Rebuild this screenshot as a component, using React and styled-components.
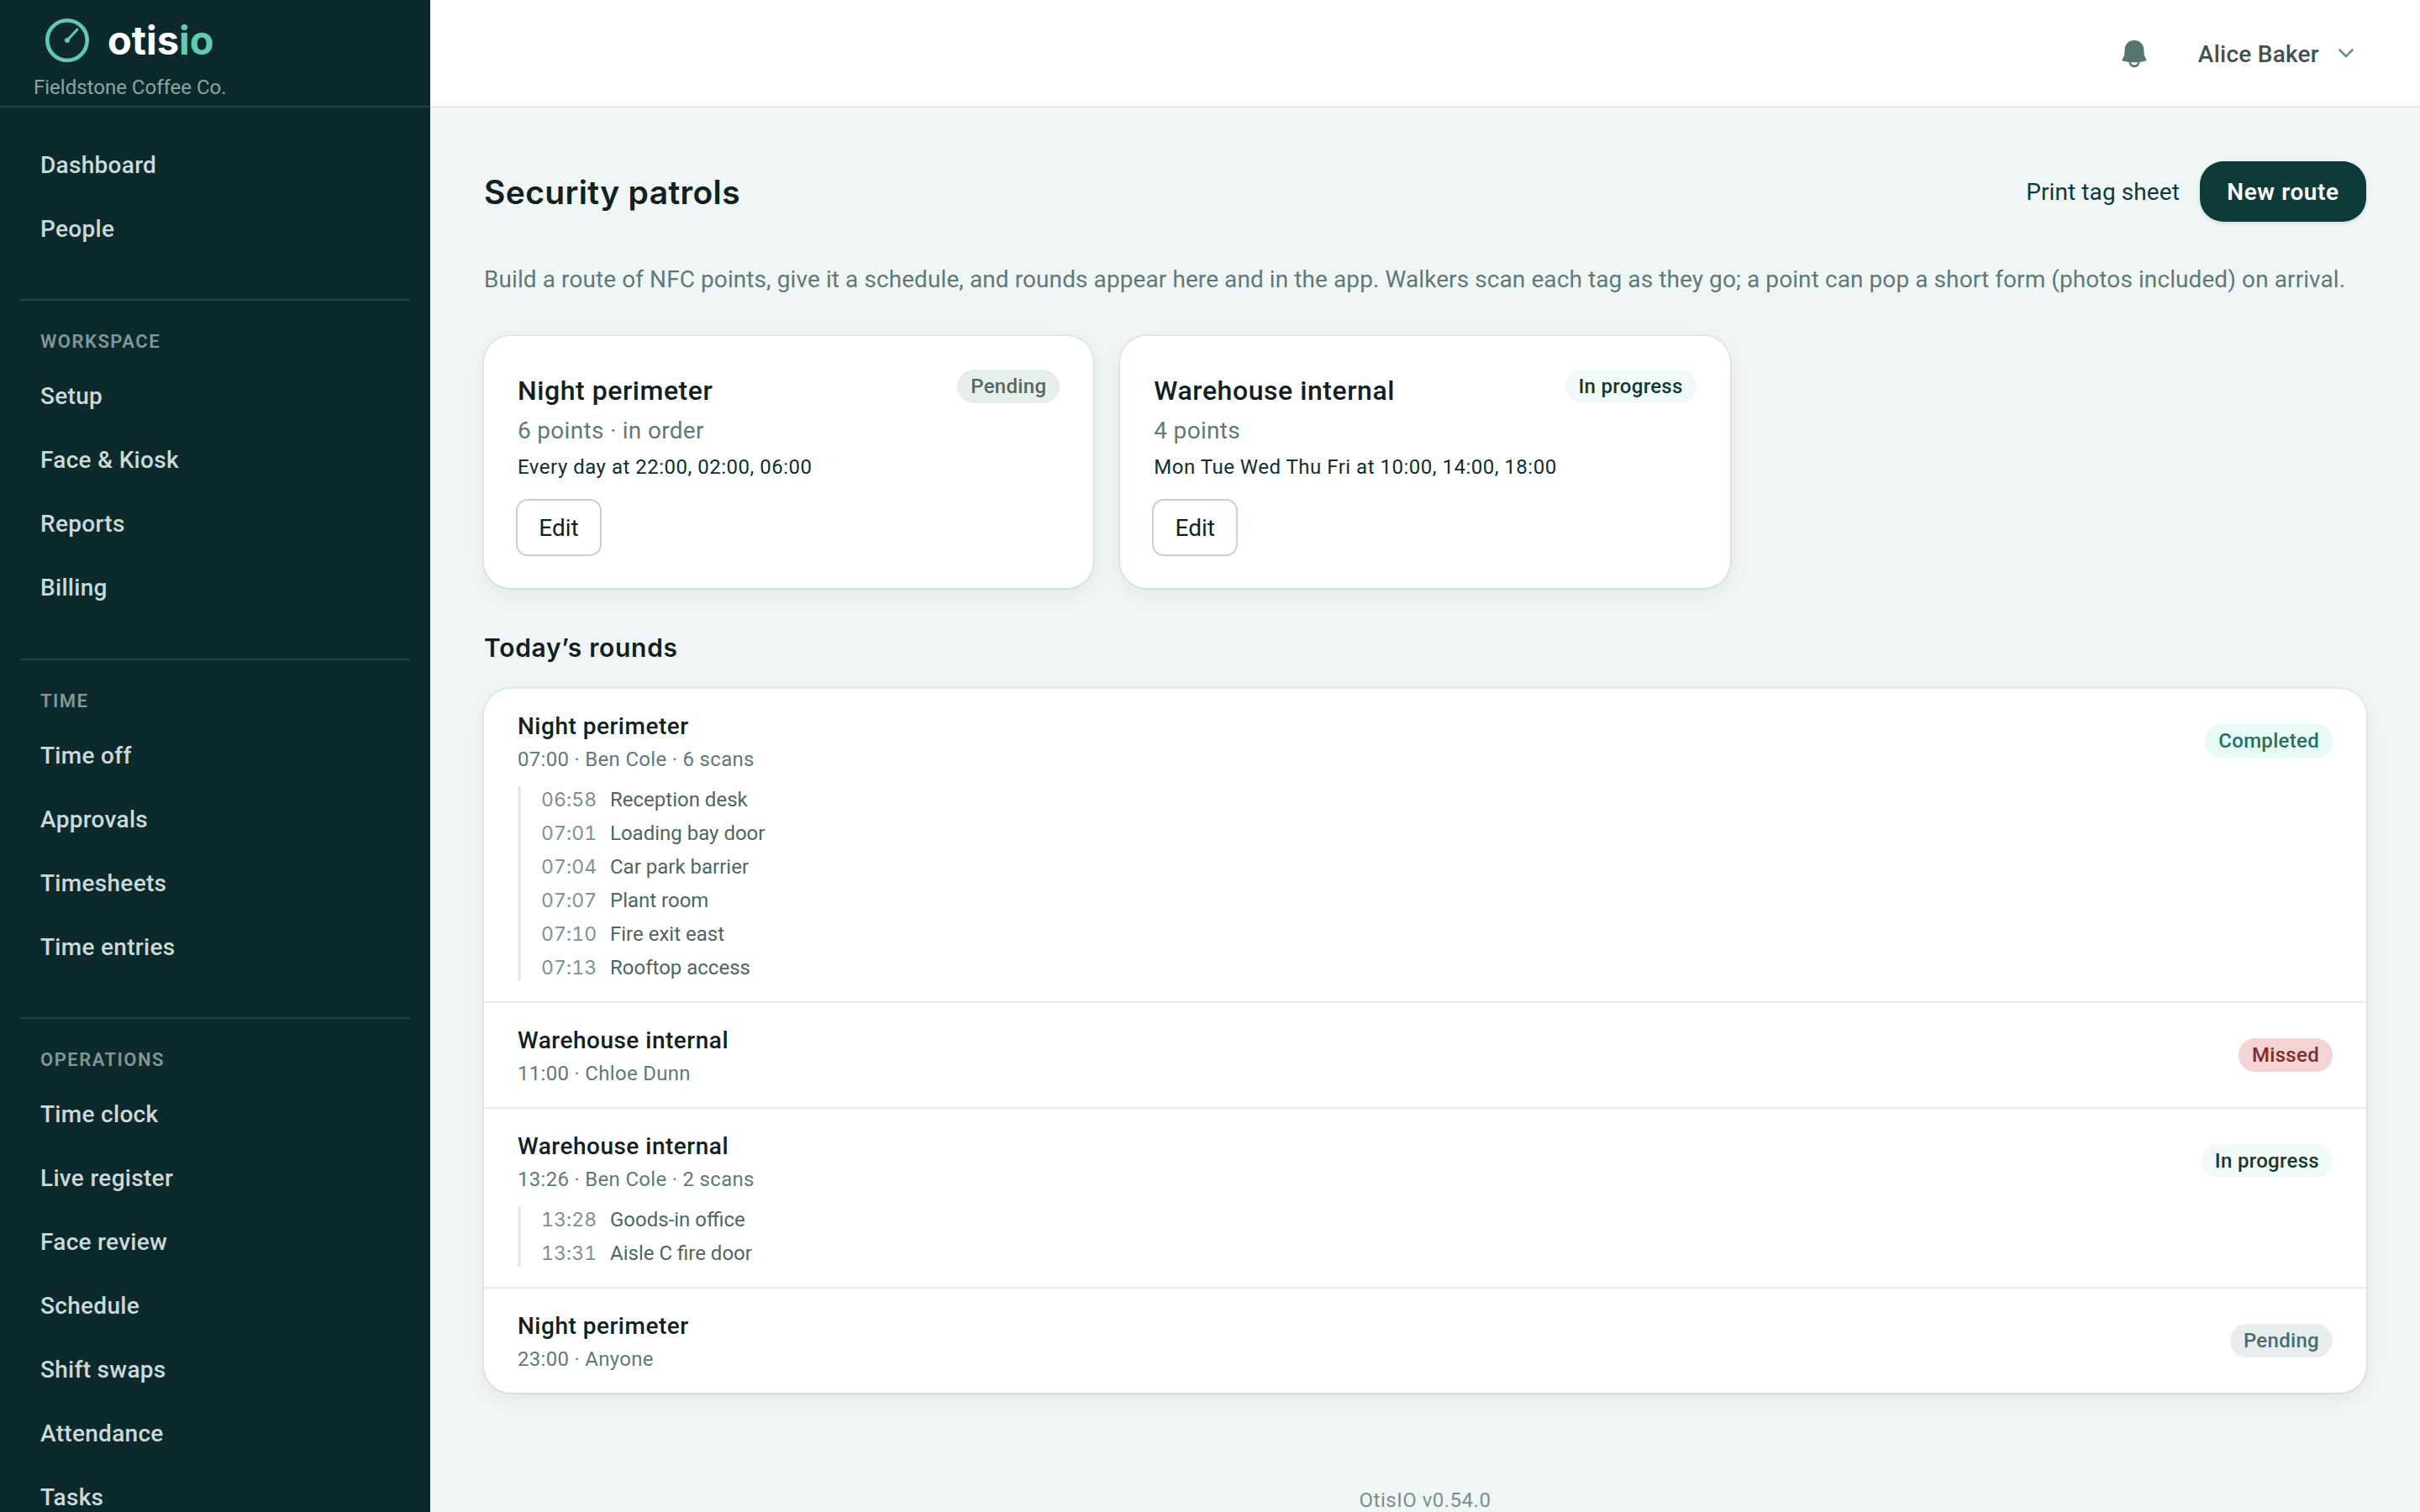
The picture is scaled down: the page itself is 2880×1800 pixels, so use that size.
import React from "react";
import styled, { createGlobalStyle, css } from "styled-components";

const navGroups = [
  { items: ["Dashboard", "People"] },
  { label: "Workspace", items: ["Setup", "Face & Kiosk", "Reports", "Billing"] },
  { label: "Time", items: ["Time off", "Approvals", "Timesheets", "Time entries"] },
  {
    label: "Operations",
    items: [
      "Time clock",
      "Live register",
      "Face review",
      "Schedule",
      "Shift swaps",
      "Attendance",
      "Tasks",
    ],
  },
];

const routes = [
  {
    name: "Night perimeter",
    points: "6 points · in order",
    schedule: "Every day at 22:00, 02:00, 06:00",
    status: "Pending",
  },
  {
    name: "Warehouse internal",
    points: "4 points",
    schedule: "Mon Tue Wed Thu Fri at 10:00, 14:00, 18:00",
    status: "In progress",
  },
];

const rounds = [
  {
    name: "Night perimeter",
    meta: "07:00 · Ben Cole · 6 scans",
    status: "Completed",
    scans: [
      ["06:58", "Reception desk"],
      ["07:01", "Loading bay door"],
      ["07:04", "Car park barrier"],
      ["07:07", "Plant room"],
      ["07:10", "Fire exit east"],
      ["07:13", "Rooftop access"],
    ],
  },
  { name: "Warehouse internal", meta: "11:00 · Chloe Dunn", status: "Missed" },
  {
    name: "Warehouse internal",
    meta: "13:26 · Ben Cole · 2 scans",
    status: "In progress",
    scans: [
      ["13:28", "Goods-in office"],
      ["13:31", "Aisle C fire door"],
    ],
  },
  { name: "Night perimeter", meta: "23:00 · Anyone", status: "Pending" },
];

function Sidebar() {
  return (
    <Aside>
      <Brand>
        <LogoRow>
          <LogoMark viewBox="0 0 52 52">
            <circle cx="26" cy="26" r="23.7" fill="none" stroke="#62c9b5" strokeWidth="4.6" />
            <path d="M26 26 37.8 13.2" stroke="#62c9b5" strokeWidth="3" strokeLinecap="round" />
            <circle cx="26" cy="26" r="3" fill="#62c9b5" />
          </LogoMark>
          <Wordmark>
            otis<em>io</em>
          </Wordmark>
        </LogoRow>
        <Company>Fieldstone Coffee Co.</Company>
      </Brand>
      <Nav>
        {navGroups.map((group, i) => (
          <NavGroup key={i} $divided={i > 0}>
            {group.label && <NavLabel>{group.label}</NavLabel>}
            {group.items.map((item) => (
              <NavItem key={item}>{item}</NavItem>
            ))}
          </NavGroup>
        ))}
      </Nav>
    </Aside>
  );
}

function Topbar() {
  return (
    <Header>
      <BellIcon viewBox="0 0 30 33">
        <path
          d="M15 0C8.400 0 3.800 4.800 3.600 11L3.200 17.500 0.200 24.200 8.400 26C9.200 30 11.700 32.300 15 32.300S20.800 30 21.600 26L29.800 24.200 26.800 17.500 26.400 11C26.200 4.800 21.600 0 15 0Z"
          fill="#557570"
        />
        <path d="M10.800 26.300H19.200C18.600 28.400 17 29.500 15 29.500S11.400 28.400 10.800 26.300Z" fill="#fff" />
      </BellIcon>
      <UserName>Alice Baker</UserName>
      <Chevron viewBox="0 0 18 12">
        <path d="M1.500 1.500 9 9 16.500 1.500" />
      </Chevron>
    </Header>
  );
}

function RouteCard({ route }) {
  return (
    <Card>
      <CardHead>
        <CardTitle>{route.name}</CardTitle>
        <Badge $status={route.status}>{route.status}</Badge>
      </CardHead>
      <Points>{route.points}</Points>
      <ScheduleLine>{route.schedule}</ScheduleLine>
      <EditButton>Edit</EditButton>
    </Card>
  );
}

function RoundRow({ round }) {
  return (
    <Row>
      <div>
        <RowTitle>{round.name}</RowTitle>
        <RowMeta>{round.meta}</RowMeta>
        {round.scans && (
          <Scans>
            {round.scans.map(([time, point]) => (
              <Scan key={time}>
                <ScanTime>{time}</ScanTime>
                {point}
              </Scan>
            ))}
          </Scans>
        )}
      </div>
      <RowBadge $status={round.status}>{round.status}</RowBadge>
    </Row>
  );
}

function App() {
  return (
    <Page>
      <GlobalStyle />
      <Sidebar />
      <Main>
        <Topbar />
        <Content>
          <TitleRow>
            <Title>Security patrols</Title>
            <PrintLink>Print tag sheet</PrintLink>
            <PrimaryButton>New route</PrimaryButton>
          </TitleRow>
          <Intro>
            Build a route of NFC points, give it a schedule, and rounds appear here and in the app.
            Walkers scan each tag as they go; a point can pop a short form (photos included) on
            arrival.
          </Intro>
          <CardGrid>
            {routes.map((route) => (
              <RouteCard key={route.name} route={route} />
            ))}
          </CardGrid>
          <Subtitle>Today’s rounds</Subtitle>
          <Panel>
            {rounds.map((round, i) => (
              <RoundRow key={i} round={round} />
            ))}
          </Panel>
          <Footer>OtisIO v0.54.0</Footer>
        </Content>
      </Main>
    </Page>
  );
}

const GlobalStyle = createGlobalStyle`
  * {
    box-sizing: border-box;
  }

  body {
    margin: 0;
    overflow: hidden;
    background: #f0f6f6;
    color: #12201e;
    font-family: Roboto, "Noto Sans", sans-serif;
    font-size: 28px;
  }
`;

const display = css`
  font-family: Inter, "Liberation Sans", sans-serif;
  font-weight: 600;
`;

const surface = css`
  background: #fff;
  border-radius: 32px;
  box-shadow:
    0 0 0 2px rgba(14, 58, 50, 0.055),
    0 2px 4px rgba(14, 40, 36, 0.02),
    0 8px 24px rgba(14, 40, 36, 0.06);
`;

const Page = styled.div`
  display: flex;
  height: 1800px;
  overflow: hidden;
`;

const Aside = styled.aside`
  flex: 0 0 512px;
  background: #0c2a2b;
  overflow: hidden;
`;

const Brand = styled.div`
  height: 128px;
  border-bottom: 2px solid #233f3f;
  padding: 17px 0 0 40px;
`;

const LogoRow = styled.div`
  display: flex;
  align-items: center;
  height: 61px;
  padding-left: 14px;
  gap: 22px;
`;

const LogoMark = styled.svg`
  width: 52px;
  height: 52px;
`;

const Wordmark = styled.span`
  ${display}
  font-size: 47px;
  font-weight: 700;
  color: #fff;

  em {
    font-style: normal;
    color: #62c9b5;
  }
`;

const Company = styled.div`
  padding-top: 5px;
  font-size: 24px;
  line-height: 43px;
  color: #8ca3a3;
`;

const Nav = styled.nav`
  padding: 30px 24px 0;
`;

const NavGroup = styled.div`
  padding: 0 24px;
  ${(p) =>
    p.$divided &&
    css`
      margin-top: 46px;
      border-top: 2px solid #233f3f;
    `}
`;

const NavLabel = styled.div`
  height: 75.5px;
  padding-top: 35px;
  font-size: 22px;
  line-height: 28px;
  font-weight: 600;
  letter-spacing: 1.5px;
  text-transform: uppercase;
  color: #82979a;
`;

const NavItem = styled.a`
  display: flex;
  align-items: center;
  height: 76px;
  font-weight: 500;
  letter-spacing: 0.3px;
  color: #cbd9da;
`;

const Main = styled.main`
  flex: 1;
`;

const Header = styled.header`
  display: flex;
  align-items: center;
  justify-content: flex-end;
  height: 128px;
  padding: 2px 79px 0 0;
  background: #fff;
  border-bottom: 2px solid #dfe9e7;
`;

const BellIcon = styled.svg`
  width: 30px;
  height: 33px;
  margin-right: 61px;
`;

const UserName = styled.span`
  font-weight: 500;
  letter-spacing: 0.25px;
  color: #40514e;
`;

const Chevron = styled.svg`
  width: 18px;
  height: 12px;
  margin-left: 23px;
  fill: none;
  stroke: #6b8f88;
  stroke-width: 2.6;
  stroke-linecap: round;
  stroke-linejoin: round;
`;

const Content = styled.section`
  padding: 64px 64px 0;
`;

const TitleRow = styled.div`
  display: flex;
  align-items: center;
  height: 72px;
`;

const Title = styled.h1`
  ${display}
  flex: 1;
  margin: 0;
  font-size: 39px;
  letter-spacing: 0.35px;
`;

const PrintLink = styled.a`
  margin-right: 24px;
  letter-spacing: 0.1px;
  color: #0e3a3a;
`;

const PrimaryButton = styled.button`
  width: 198px;
  height: 72px;
  padding: 0;
  border: 0;
  border-radius: 28px;
  background: #0e3a3a;
  color: #fff;
  font: inherit;
  font-weight: 600;
  letter-spacing: 0.6px;
  box-shadow: 0 2px 4px rgba(14, 40, 36, 0.14);
`;

const Intro = styled.p`
  margin: 48px 0 0;
  line-height: 42px;
  letter-spacing: 0.085px;
  white-space: nowrap;
  color: #5f7a75;
`;

const CardGrid = styled.div`
  display: grid;
  grid-template-columns: repeat(3, 1fr);
  gap: 32px;
  margin-top: 46px;
`;

const Card = styled.article`
  ${surface}
  height: 300px;
  padding: 40px;
`;

const CardHead = styled.div`
  display: flex;
  align-items: flex-start;
  justify-content: space-between;
`;

const CardTitle = styled.h2`
  margin: 0;
  font-size: 32px;
  line-height: 50px;
  font-weight: 500;
  letter-spacing: 0.55px;
`;

const badgeColors = {
  Pending: ["#e8eeed", "#506a65"],
  "In progress": ["#f2f9f9", "#0e3a32"],
  Completed: ["#e8faf5", "#27705f"],
  Missed: ["#f5d3d3", "#842a2c"],
};

const Badge = styled.span`
  height: 40px;
  padding: 0 16px;
  border-radius: 20px;
  font-size: 24px;
  line-height: 40px;
  font-weight: 500;
  letter-spacing: 0.3px;
  white-space: nowrap;
  background: ${(p) => badgeColors[p.$status][0]};
  color: ${(p) => badgeColors[p.$status][1]};
`;

const Points = styled.div`
  padding-top: 1px;
  line-height: 44px;
  letter-spacing: 0.3px;
  color: #5f7a75;
`;

const ScheduleLine = styled.div`
  font-size: 24px;
  line-height: 43px;
  letter-spacing: 0.5px;
  color: #0e302c;
`;

const EditButton = styled.button`
  width: 98px;
  height: 64px;
  margin-top: 18px;
  padding: 0;
  border: 0;
  border-radius: 12px;
  background: #fff;
  box-shadow: 0 0 0 2px #c3d3cf;
  color: #12201e;
  font: inherit;
`;

const Subtitle = styled.h2`
  ${display}
  margin: 49px 0 27px;
  font-size: 30px;
  line-height: 44px;
  letter-spacing: 0.7px;
`;

const Panel = styled.div`
  ${surface}
`;

const Row = styled.div`
  display: flex;
  align-items: flex-start;
  justify-content: space-between;
  padding: 24px 40px;
  border-bottom: 2px solid #e8eceb;

  &:last-child {
    border-bottom: 0;
  }
`;

const RowTitle = styled.div`
  line-height: 42px;
  font-weight: 500;
  letter-spacing: 0.5px;
`;

const RowMeta = styled.div`
  padding-top: 2px;
  font-size: 24px;
  line-height: 32px;
  letter-spacing: 0.3px;
  color: #5f7a75;
`;

const Scans = styled.div`
  display: flex;
  flex-direction: column;
  gap: 8px;
  margin-top: 16px;
  padding-left: 24px;
  border-left: 4px solid #e6edec;
`;

const Scan = styled.div`
  display: flex;
  font-size: 24px;
  line-height: 32px;
  color: #4f6660;
`;

const ScanTime = styled.span`
  width: 82px;
  font-family: Inter, sans-serif;
  font-size: 23px;
  font-variant-numeric: tabular-nums;
  letter-spacing: 0.1px;
  color: #7b928d;
`;

const RowBadge = styled(Badge)`
  margin-top: 18px;
`;

const Footer = styled.footer`
  margin-top: 109px;
  font-size: 24px;
  line-height: 38px;
  letter-spacing: 0.5px;
  text-align: center;
  color: #78918c;
`;

export default App;
